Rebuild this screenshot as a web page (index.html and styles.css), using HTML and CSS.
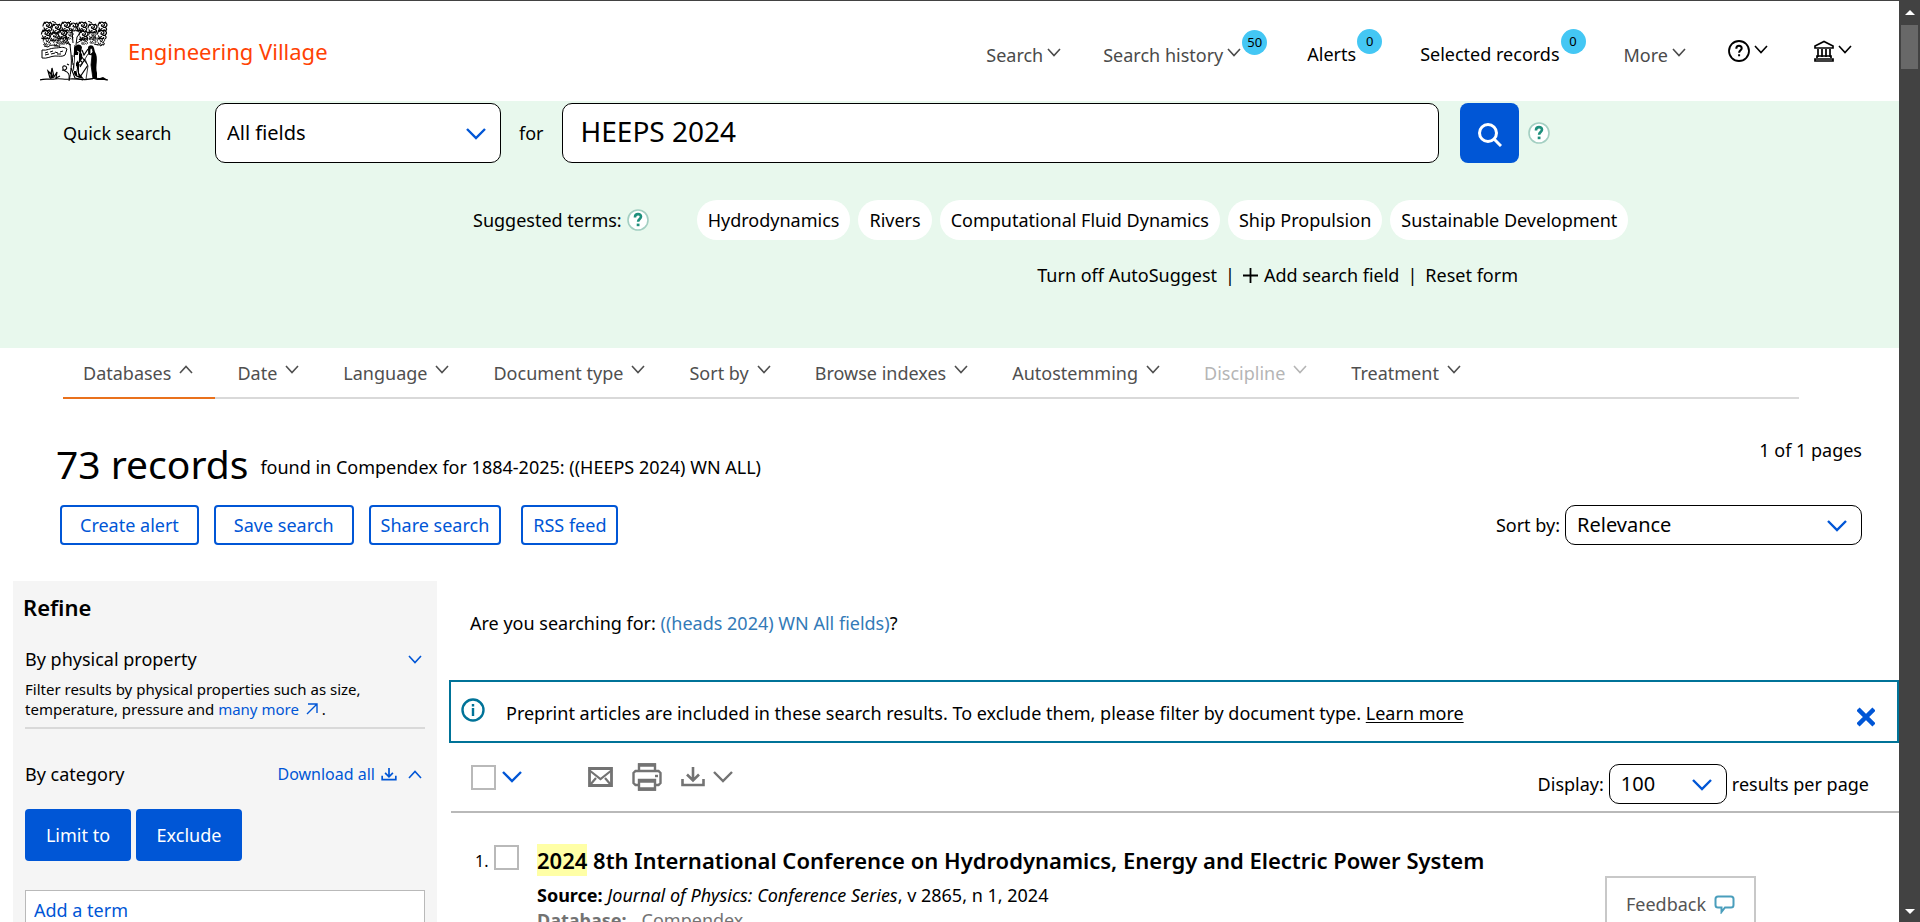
FILE: index.html
```html
<!DOCTYPE html>
<html lang="en">
<head>
    <meta charset="UTF-8">
    <meta name="viewport" content="width=device-width, initial-scale=1.0">
    <title>Engineering Village - Quick Search</title>
    <link rel="stylesheet" href="styles.css">
</head>
<body>

<svg class="defs" aria-hidden="true">
    <symbol id="chevron" viewBox="0 0 14 9"><path d="M1 1l6 6.5L13 1" fill="none" stroke="currentColor" stroke-width="1.6"/></symbol>
    <symbol id="chevron-bold" viewBox="0 0 20 12"><path d="M1 1l9 9 9-9" fill="none" stroke="currentColor" stroke-width="2.4"/></symbol>
    <symbol id="download" viewBox="0 0 24 20"><path d="M1.5 12v6h21v-6M12 0v13M6 7.5l6 6 6-6" fill="none" stroke="currentColor" stroke-width="2.6"/></symbol>
    <symbol id="leaf" viewBox="0 0 12 12"><path d="M1 6c0-4 4-6 6-4s1 4-1 4-1-2 0-2M7 2c3-1 5 2 3 4s-4 1-3-1M2 7c1 4 5 5 6 2M9 7c2 1 2 3 0 4M1 10l3 1M4 3L2 1M10 1l-2 1M6 8l-2 1" fill="none" stroke="#000" stroke-width="1.3"/></symbol>
    <symbol id="help" viewBox="0 0 22 22"><circle cx="11" cy="11" r="10" fill="#fff" stroke="#a3cfc2" stroke-width="1.6"/><path d="M8 8.6V8c0-2 1.2-2.9 3-2.9s3 1 3 2.7c0 2.2-2.9 2.3-2.9 5" fill="none" stroke="#1f8f7c" stroke-width="2.6"/><path d="M9.7 14.6h2.8v2.6H9.7z" fill="#1f8f7c"/></symbol>
</svg>

<div class="window">
<div class="page">

    <header class="header">
        <a class="brand" href="#">
            <svg class="tree" viewBox="0 0 68 60" role="img" aria-label="Elsevier">
                <g>
                    <use href="#leaf" x="2" y="0" width="11" height="11"/><use href="#leaf" x="11" y="2" width="11" height="11"/><use href="#leaf" x="20" y="0" width="11" height="11"/><use href="#leaf" x="29" y="1" width="10" height="10"/><use href="#leaf" x="37" y="0" width="11" height="11"/><use href="#leaf" x="47" y="2" width="11" height="11"/><use href="#leaf" x="57" y="0" width="11" height="11"/>
                    <use href="#leaf" x="0" y="8" width="12" height="11"/><use href="#leaf" x="9" y="11" width="11" height="10"/><use href="#leaf" x="17" y="8" width="11" height="11"/><use href="#leaf" x="25" y="10" width="9" height="9"/><use href="#leaf" x="38" y="9" width="11" height="11"/><use href="#leaf" x="47" y="10" width="11" height="9"/><use href="#leaf" x="56" y="8" width="12" height="11"/>
                    <use href="#leaf" x="2" y="16" width="10" height="9"/><use href="#leaf" x="12" y="18" width="10" height="8"/><use href="#leaf" x="19" y="15" width="10" height="9"/><use href="#leaf" x="40" y="16" width="9" height="8"/><use href="#leaf" x="48" y="15" width="10" height="8"/><use href="#leaf" x="56" y="16" width="10" height="9"/>
                </g>
                <path d="M12 0l4 2M31 0l-2 2M48 0l4 2M7 10l3 3M28 9l-3 2M36 9l3 2M57 9l-3 2M36 5l2 4M4 25l4 1M60 25l4-2M54 23l4 1" fill="none" stroke="#000" stroke-width="1"/>
                <path d="M29 60c2-8 3-18 2-27l-1-9-5-9M36 24l1-8 6-8M33 22l-1-12M31 24l-9-4M37 22l8-5M35 24l-1 12M32 34l1 10M34 42l-1 8" fill="none" stroke="#000" stroke-width="1"/>
                <path d="M2 29c5 1 8-2 13-2s8-2 12 1l-2 6M2 29v8c5 1 9-2 13-2 5 0 7 1 10-1M5 32l3-1M10 31l3-1M15 31l3 1M20 31l3-1M5 34l4-1M11 33l4-1M17 33l4 0M8 26c3-3 8-2 12 0" fill="none" stroke="#000" stroke-width="1"/>
                <path d="M34 27c2-4 6-5 8-1l-1 6c2 1 1 4 1 6l-3 4v10l5 6c-6-1-10-3-10-6z" fill="#000"/>
                <path d="M35 34h4v4l-3 4v8h-2z" fill="#fff"/>
                <path d="M42 29l2 5 4-6M41 35l7 9-8 12M45 38l-5 8" fill="none" stroke="#000" stroke-width="1.2"/>
                <path d="M48 27c0-3 5-4 6 0l1 4c4 6 0 14 2 21v6h-8z" fill="#000"/>
                <path d="M50 28l2-1 1 4-3 3zM48 33l4 1-1 10 2 14h-7l2-13-3-7z" fill="#fff" stroke="#000" stroke-width=".8"/>
                <path d="M37 30l2 1-1 5 1 6M36 45l2 10" stroke="#fff" fill="none"/>
                <path d="M39 40c4-1 4 4 1 4s-2-3 0-3M22 49c5 1 6-3 3-4s-3 4 0 5 5 4 4 8M29 44l-2-1M31 47l4 10 8 2" fill="none" stroke="#000" stroke-width="1.1"/>
                <path d="M0 59c6-2 10 0 15-1s10 1 15 0 14 2 20 0 12 0 18 1M10 57l-2-7 3 3 1-6 2 9 3-5-1 6 4-2" fill="none" stroke="#000" stroke-width="1.2"/>
                <path d="M10 58l1-8 3 7zM57 58l6-2 5 3H54z"/>
            </svg>
            <span>Engineering Village</span>
        </a>
        <nav class="nav">
            <a class="nav-item low" href="#">Search <svg class="chev"><use href="#chevron"/></svg></a>
            <a class="nav-item low history" href="#">Search history <svg class="chev"><use href="#chevron"/></svg><span class="badge">50</span></a>
            <a class="nav-item dark alerts" href="#">Alerts<span class="badge">0</span></a>
            <a class="nav-item dark selected" href="#">Selected records<span class="badge">0</span></a>
            <a class="nav-item low more" href="#">More <svg class="chev"><use href="#chevron"/></svg></a>
            <button class="nav-item icon-item help-item" aria-label="Help">
                <svg width="22" height="22" viewBox="0 0 22 22" fill="none" stroke="#000"><circle cx="11" cy="11" r="10" stroke-width="1.8"/><path d="M8.300 8.700c0-2.200 1.200-3 2.700-3s2.700.9 2.700 2.500c0 2-2.600 2.100-2.600 4.600M11.100 14.200v2" stroke-width="2"/></svg>
                <svg class="chev"><use href="#chevron"/></svg>
            </button>
            <button class="nav-item icon-item" aria-label="Institution">
                <svg width="20" height="22" viewBox="0 0 20 22" fill="none" stroke="#000"><path d="M1 8V6l9-4.500L19 6v2zM1 21v-2h18v2zM3 18v-2h14v2M4 9v8M8 9v8M12 9v8M16 9v8" stroke-width="1.7"/></svg>
                <svg class="chev"><use href="#chevron"/></svg>
            </button>
        </nav>
    </header>

    <form class="search">
        <div class="search-row">
            <label class="quick" for="field">Quick search</label>
            <span class="select field-select">
                <select id="field"><option>All fields</option></select>
                <svg><use href="#chevron-bold"/></svg>
            </span>
            <label class="for" for="term">for</label>
            <input class="term" id="term" type="text" value="HEEPS 2024">
            <button class="go" type="button" aria-label="Search">
                <svg width="24" height="24" viewBox="0 0 24 24" fill="none" stroke="#fff" stroke-width="3"><circle cx="10" cy="10" r="8.500"/><path d="M16 16l7 7"/></svg>
            </button>
            <button class="help" type="button" aria-label="Search help"><svg width="22" height="22"><use href="#help"/></svg></button>
        </div>
        <div class="suggested">
            <span>Suggested terms:</span>
            <button class="help" type="button" aria-label="Suggested terms help"><svg width="22" height="22"><use href="#help"/></svg></button>
            <div class="pills">
                <button type="button">Hydrodynamics</button>
                <button type="button">Rivers</button>
                <button type="button">Computational Fluid Dynamics</button>
                <button type="button">Ship Propulsion</button>
                <button type="button">Sustainable Development</button>
            </div>
        </div>
        <div class="form-links">
            <a href="#">Turn off AutoSuggest</a>
            <span>|</span>
            <a href="#"><svg width="15" height="15" viewBox="0 0 15 15"><path d="M7.500 0v15M0 7.500h15" stroke="#000" stroke-width="1.8"/></svg>Add search field</a>
            <span>|</span>
            <a href="#">Reset form</a>
        </div>
    </form>

    <nav class="tabs">
        <button class="active">Databases <svg class="chev up"><use href="#chevron"/></svg></button>
        <button>Date <svg class="chev"><use href="#chevron"/></svg></button>
        <button>Language <svg class="chev"><use href="#chevron"/></svg></button>
        <button>Document type <svg class="chev"><use href="#chevron"/></svg></button>
        <button>Sort by <svg class="chev"><use href="#chevron"/></svg></button>
        <button>Browse indexes <svg class="chev"><use href="#chevron"/></svg></button>
        <button>Autostemming <svg class="chev"><use href="#chevron"/></svg></button>
        <button disabled>Discipline <svg class="chev"><use href="#chevron"/></svg></button>
        <button>Treatment <svg class="chev"><use href="#chevron"/></svg></button>
    </nav>

    <section class="summary">
        <div class="summary-top">
            <h1>73 records</h1>
            <span class="query">found in Compendex for 1884-2025: ((HEEPS 2024) WN ALL)</span>
            <span class="pages">1 of 1 pages</span>
        </div>
        <div class="summary-bar">
            <button class="outline wide">Create alert</button>
            <button class="outline wide">Save search</button>
            <button class="outline">Share search</button>
            <button class="outline rss">RSS feed</button>
            <div class="sort">
                <label for="sort">Sort by:</label>
                <span class="select sort-select">
                    <select id="sort"><option>Relevance</option></select>
                    <svg><use href="#chevron-bold"/></svg>
                </span>
            </div>
        </div>
    </section>

    <div class="columns">
        <aside class="refine">
            <h2>Refine</h2>
            <div class="facet">
                <h3>By physical property</h3>
                <button class="toggle" aria-label="Expand"><svg class="chev"><use href="#chevron"/></svg></button>
            </div>
            <p>Filter results by physical properties such as size, temperature, pressure and <a href="#">many more <svg width="12" height="12" viewBox="0 0 12 12"><path d="M1 11L11 1M2 1h9v9" fill="none" stroke="currentColor" stroke-width="1.4"/></svg></a> .</p>
            <hr>
            <div class="facet">
                <h3>By category</h3>
                <a class="download-all" href="#">Download all <svg width="16" height="13"><use href="#download"/></svg></a>
                <button class="toggle" aria-label="Collapse"><svg class="chev up"><use href="#chevron"/></svg></button>
            </div>
            <div class="facet-buttons">
                <button>Limit to</button>
                <button>Exclude</button>
            </div>
            <input class="add-term" type="text" placeholder="Add a term" aria-label="Add a term">
        </aside>

        <main class="results">
            <p class="did-you-mean">Are you searching for: <a href="#">((heads 2024) WN All fields)</a>?</p>

            <div class="notice">
                <svg width="24" height="24" viewBox="0 0 24 24" fill="none" stroke="#007398" stroke-width="2.4"><circle cx="12" cy="12" r="10.500"/><path d="M12 10v8M12 6v2.400"/></svg>
                <p>Preprint articles are included in these search results. To exclude them, please filter by document type. <a href="#">Learn more</a></p>
                <button aria-label="Close"><svg width="18" height="20" viewBox="0 0 18 20"><path d="M1 2l16 16M17 2L1 18" stroke="#0056d6" stroke-width="4.5"/></svg></button>
            </div>

            <div class="toolbar">
                <input type="checkbox" aria-label="Select all">
                <button class="blue" aria-label="Select options"><svg width="20" height="12"><use href="#chevron-bold"/></svg></button>
                <div class="tools">
                    <button aria-label="Email"><svg width="25" height="20" viewBox="0 0 25 20" fill="none" stroke="#737373"><path d="M1.500 1.500h22v17h-22z" stroke-width="2.8"/><path d="M1 3l11.500 9L24 3M2 18l6-7M23 18l-6-7" stroke-width="2.2"/></svg></button>
                    <button aria-label="Print"><svg width="30" height="28" viewBox="0 0 30 28" fill="none" stroke="#737373" stroke-width="2.4"><path d="M7 8V1.500h16V8M6 22H3.500L1.500 20V10l2-2h23l2 2v10l-2 2H24M7 17h16v9.500H7z"/><path d="M6 18h18M6 26h18M6 2h18" stroke-width="3.6"/><path d="M23 13h3" stroke-width="2.4"/></svg></button>
                    <button aria-label="Download"><svg width="24" height="20"><use href="#download"/></svg><svg width="20" height="12"><use href="#chevron-bold"/></svg></button>
                </div>
                <div class="display">
                    <label for="display">Display:</label>
                    <span class="select display-select">
                        <select id="display"><option>100</option></select>
                        <svg><use href="#chevron-bold"/></svg>
                    </span>
                    <span>results per page</span>
                </div>
            </div>

            <article class="result">
                <span class="number">1.</span>
                <input type="checkbox" aria-label="Select record 1">
                <div class="record">
                    <h3><mark>2024</mark> 8th International Conference on Hydrodynamics, Energy and Electric Power System</h3>
                    <div class="source"><b>Source:</b> <i>Journal of Physics: Conference Series</i>, v 2865, n 1, 2024</div>
                    <div class="database"><b>Database:</b><span>Compendex</span></div>
                </div>
            </article>
        </main>
    </div>
</div>

<div class="scrollbar" aria-hidden="true">
    <span class="arrow-up"></span>
    <span class="thumb"></span>
    <span class="arrow-down"></span>
</div>
</div>

<button class="feedback">Feedback
    <svg width="21" height="19" viewBox="0 0 21 19"><path d="M4 1.500h13c1.500 0 2.500 1 2.500 2.500v6c0 1.500-1 2.500-2.500 2.500h-6L7.500 17v-4.500H4c-1.500 0-2.500-1-2.500-2.500V4c0-1.500 1-2.500 2.500-2.500z" fill="none" stroke="#4a9ebc" stroke-width="2"/></svg>
</button>

</body>
</html>
```
FILE: styles.css
```css
* {
    box-sizing: border-box;
}

body {
    margin: 0;
    font-family: 'Noto Sans', 'Open Sans', sans-serif;
    font-size: 18px;
    line-height: 24px;
    color: #000;
    background-color: #fff;
    overflow: hidden;
}

button, input, select {
    font: inherit;
    color: inherit;
}

button {
    padding: 0;
    border: none;
    background: none;
    cursor: pointer;
}

a {
    color: #0056d6;
    text-decoration: none;
}

h1, h2, h3, p {
    margin: 0;
}

svg {
    display: block;
    flex: none;
}

.defs {
    position: absolute;
    width: 0;
    height: 0;
}

.window {
    display: flex;
    height: 100vh;
    border-top: 1px solid #424242;
}

.page {
    flex: 1;
    min-width: 0;
    overflow: hidden;
}

.chev {
    width: 14px;
    height: 9px;
}

.up {
    transform: rotate(180deg);
}

/* header */
.header {
    display: flex;
    align-items: center;
    justify-content: space-between;
    height: 100px;
    padding: 0 47px 0 40px;
}

.brand {
    display: flex;
    align-items: center;
    gap: 20px;
    font-size: 22px;
    color: #ff4203;
}

.tree {
    width: 68px;
    height: 60px;
}

.nav {
    display: flex;
    align-items: center;
}

.nav-item {
    position: relative;
    display: flex;
    align-items: center;
    gap: 4px;
    margin-right: 42px;
    color: #4a4a4a;
}

.nav-item:last-child {
    margin-right: 0;
}

.low {
    padding-top: 8px;
}

.low .chev {
    margin-bottom: 5px;
}

.dark {
    color: #000;
    padding-top: 5px;
}

.history {
    margin-right: 66px;
}

.alerts, .selected {
    margin-right: 64px;
}

.icon-item .chev {
    margin-bottom: 3px;
    color: #000;
}

.help-item {
    margin-right: 46px;
}

.badge {
    position: absolute;
    left: 100%;
    bottom: 12px;
    width: 25px;
    height: 25px;
    margin-left: 1px;
    border-radius: 50%;
    background-color: #44c7f4;
    font-size: 13px;
    line-height: 25px;
    text-align: center;
    color: #000;
}

/* search form */
.search {
    height: 247px;
    padding-top: 2px;
    background-color: #e8f8ed;
}

.search-row {
    display: flex;
    align-items: center;
    padding: 0 349px 0 63px;
}

.quick {
    flex: none;
    width: 152px;
}

.select {
    position: relative;
    flex: none;
}

.select select {
    appearance: none;
    width: 100%;
    height: 40px;
    padding: 0 11px;
    border: 1px solid #000;
    border-radius: 10px;
    background-color: #fff;
    font-size: 20px;
}

.select svg {
    position: absolute;
    right: 15px;
    top: 50%;
    width: 20px;
    height: 12px;
    margin-top: -5px;
    color: #0056d6;
    pointer-events: none;
}

.field-select {
    width: 286px;
}

.field-select select {
    height: 60px;
}

.for {
    padding: 0 18px;
}

.term {
    flex: 1;
    min-width: 0;
    height: 60px;
    padding: 0 18px 4px;
    border: 1px solid #000;
    border-radius: 10px;
    background-color: #fff;
    font-size: 28px;
}

.go {
    display: flex;
    align-items: center;
    justify-content: center;
    flex: none;
    width: 59px;
    height: 60px;
    margin: 0 9px 0 21px;
    padding-top: 3px;
    border-radius: 8px;
    background-color: #0056d6;
}

.suggested {
    display: flex;
    align-items: center;
    margin-top: 37px;
    padding-left: 473px;
}

.suggested .help {
    margin-left: 5px;
}

.pills {
    display: flex;
    gap: 8px;
    margin-left: 48px;
}

.pills button {
    height: 40px;
    padding: 0 11px;
    border-radius: 20px;
    background-color: #fff;
}

.form-links {
    display: flex;
    justify-content: flex-end;
    gap: 8px;
    margin-top: 23px;
    padding-right: 381px;
}

.form-links a {
    display: flex;
    align-items: center;
    gap: 6px;
    color: #000;
}

/* option tabs */
.tabs {
    display: flex;
    margin: 0 100px 0 63px;
    border-bottom: 2px solid #d9d9d9;
}

.tabs button {
    display: flex;
    align-items: center;
    gap: 8px;
    height: 51px;
    margin-bottom: -2px;
    padding: 0 22px;
    border-bottom: 2px solid transparent;
    color: #4f4f4f;
}

.tabs .chev {
    margin-bottom: 6px;
}

.tabs .active {
    padding-left: 20px;
    border-bottom-color: #e9711c;
}

.tabs button:disabled {
    color: #b5b5b5;
}

/* result count and actions */
.summary {
    padding: 35px 37px 0 56px;
}

.summary-top {
    display: flex;
    align-items: center;
}

.summary-top h1 {
    font-size: 39px;
    font-weight: normal;
    line-height: 60px;
}

.query {
    margin-left: 12px;
    padding-top: 6px;
}

.pages {
    align-self: flex-start;
    margin: 4px 0 0 auto;
}

.summary-bar {
    display: flex;
    align-items: center;
    gap: 15px;
    margin-top: 11px;
    padding-left: 4px;
}

.outline {
    height: 40px;
    padding: 0 10px;
    border: 2px solid #0056d6;
    border-radius: 4px;
    background-color: #fff;
    color: #0056d6;
}

.wide {
    padding: 0 18px;
}

.rss {
    margin-left: 5px;
}

.sort, .display {
    display: flex;
    align-items: center;
    gap: 5px;
    margin-left: auto;
}

.sort-select {
    width: 297px;
}

/* columns */
.columns {
    display: flex;
    align-items: flex-start;
    gap: 12px;
    margin-top: 36px;
    padding-left: 13px;
}

.refine {
    flex: none;
    width: 424px;
    height: 800px;
    padding: 14px 12px 0;
    background-color: #f5f5f5;
}

.refine h2 {
    margin-left: -2px;
    font-size: 22px;
    font-weight: 600;
}

.facet {
    display: flex;
    align-items: center;
    margin-top: 28px;
    padding-right: 3px;
}

.facet h3 {
    flex: 1;
    font-size: 18px;
    font-weight: normal;
}

.toggle {
    color: #0056d6;
}

.refine p {
    margin-top: 8px;
    font-size: 15px;
    line-height: 20px;
}

.refine p svg {
    display: inline-block;
    margin-left: 3px;
}

.refine hr {
    height: 2px;
    margin: 8px 0 0;
    border: none;
    background-color: #d9d9d9;
}

.refine hr + .facet {
    margin-top: 33px;
}

.download-all {
    display: flex;
    align-items: center;
    gap: 6px;
    margin-right: 11px;
    font-size: 16px;
}

.facet-buttons {
    display: flex;
    gap: 5px;
    margin-top: 23px;
}

.facet-buttons button {
    width: 106px;
    height: 52px;
    border-radius: 4px;
    background-color: #0056d6;
    color: #fff;
}

.add-term {
    width: 100%;
    height: 40px;
    margin-top: 29px;
    padding: 0 8px;
    border: 1px solid #b9b9b9;
    background-color: #fff;
}

.add-term::placeholder {
    color: #0056d6;
}

.results {
    flex: 1;
    min-width: 0;
}

.did-you-mean {
    padding: 30px 21px 0;
}

.did-you-mean a {
    color: #337ab7;
}

.notice {
    display: flex;
    align-items: center;
    height: 63px;
    margin-top: 45px;
    padding: 0 22px 0 10px;
    border: 2px solid #007398;
}

.notice > svg {
    margin-bottom: 4px;
}

.notice p {
    flex: 1;
    margin-left: 21px;
    padding-top: 3px;
}

.notice a {
    color: #000;
    text-decoration: underline;
    text-underline-offset: 2px;
}

.notice button {
    padding-top: 10px;
}

.toolbar {
    display: flex;
    align-items: center;
    height: 70px;
    margin-left: 2px;
    padding: 14px 30px 0 20px;
    border-bottom: 2px solid #b9b9b9;
}

input[type="checkbox"] {
    appearance: none;
    flex: none;
    width: 25px;
    height: 25px;
    margin: 0;
    border: 2px solid #b9b9b9;
    background-color: #fff;
}

.toolbar > input, .toolbar > button, .tools {
    margin-bottom: 14px;
}

.blue {
    margin-left: 6px;
    color: #0056d6;
}

.tools {
    display: flex;
    align-items: center;
    gap: 19px;
    margin-left: 66px;
    color: #737373;
}

.tools button {
    display: flex;
    align-items: center;
    gap: 8px;
    color: #737373;
}

.display-select {
    width: 118px;
}

.result {
    display: flex;
    align-items: flex-start;
    padding: 31px 30px 0 26px;
}

.number {
    width: 19px;
    padding-top: 5px;
    font-size: 16px;
}

.result input {
    margin: 1px 18px 0 0;
}

.record h3 {
    font-size: 22px;
    font-weight: 600;
    line-height: 32px;
}

.record mark {
    display: inline-block;
    background-color: #ffffa6;
}

.record div {
    line-height: 25px;
}

.source {
    margin-top: 7px;
}

.database {
    color: #737373;
}

.database span {
    margin-left: 15px;
}

/* drawn scrollbar */
.scrollbar {
    display: flex;
    flex-direction: column;
    align-items: center;
    flex: none;
    width: 21px;
    padding: 9px 0 8px;
    background-color: #424242;
}

.arrow-up, .arrow-down {
    border: 5px solid transparent;
    border-top: none;
    border-bottom: 5px solid #fff;
}

.arrow-down {
    margin-top: auto;
    transform: rotate(180deg);
}

.thumb {
    width: 17px;
    height: 44px;
    margin-top: 10px;
    background-color: #686868;
}

.feedback {
    position: fixed;
    right: 164px;
    bottom: 0;
    display: flex;
    align-items: center;
    justify-content: center;
    gap: 8px;
    width: 151px;
    height: 46px;
    padding-top: 8px;
    border: 2px solid #c8c8c8;
    border-bottom: none;
    background-color: #fff;
    color: #545454;
}
```
